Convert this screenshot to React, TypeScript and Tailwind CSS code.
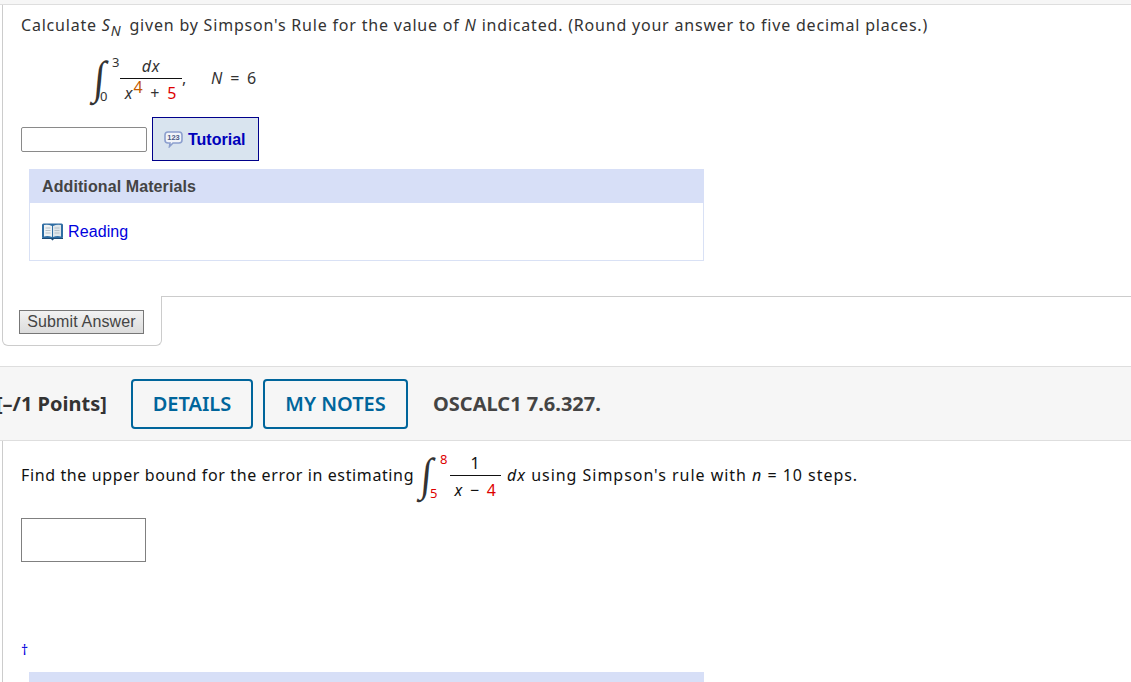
import React from 'react';

// stacked fraction used by both questions
function Fraction({ top, bottom, width }: { top: React.ReactNode; bottom: React.ReactNode; width: string }) {
  return (
    <span className={`inline-flex flex-col items-center ${width}`}>
      <span className="h-[24px] leading-[24px]">{top}</span>
      <span className="w-full h-px bg-[#111]" />
      <span className="h-[24px] leading-[28px] whitespace-nowrap [word-spacing:2px]">{bottom}</span>
    </span>
  );
}

function Integral({ upper, lower, color, gap, lowerGap }: { upper: string; lower: string; color: string; gap: string; lowerGap: string }) {
  return (
    <span className="inline-flex items-center h-[50px] w-[28px] shrink-0 relative">
      <span className="font-['Liberation_Serif',serif] text-[40px] leading-[50px] w-[14px] ml-[1px] flex justify-center scale-y-[1.15] -skew-x-6 font-normal text-[#333]">∫</span>
      <span className={`absolute top-[2px] text-[13px] leading-[14px] ${gap} ${color}`}>{upper}</span>
      <span className={`absolute bottom-0 text-[13px] leading-[14px] ${lowerGap} ${color}`}>{lower}</span>
    </span>
  );
}

function BookIcon() {
  return (
    <svg width="21" height="18" viewBox="0 0 21 18">
      <rect x="0" y="0.5" width="21" height="15" rx="1.5" fill="#2f6da3" />
      <path d="M2 2 Q6 1 10 3 V14 Q6 12.5 2 13.5 Z" fill="#eef2f4" />
      <path d="M19 2 Q15 1 11 3 V14 Q15 12.5 19 13.5 Z" fill="#dfe6ea" />
      <path d="M3.5 5 H8.5 M3.5 7.5 H8.5 M3.5 10 H8.5 M12.5 5 H17.5 M12.5 7.5 H17.5 M12.5 10 H17.5" stroke="#b4bfc8" strokeWidth="1" />
      <path d="M0 15 H21 V16 H12 L10.5 17.5 L9 16 H0 Z" fill="#1b4a76" />
    </svg>
  );
}

function TutorialIcon() {
  return (
    <svg width="19" height="17" viewBox="0 0 19 17">
      <path d="M4 1 H15 Q18 1 18 4 V9 Q18 12 15 12 H9 L5.5 15.5 L6 12 H4 Q1 12 1 9 V4 Q1 1 4 1 Z" fill="#f1f4f9" stroke="#8c9fce" strokeWidth="1.6" />
      <text x="9.5" y="9.2" textAnchor="middle" fontSize="7.5" fontWeight="700" fill="#4a5a86" fontFamily="Liberation Sans, sans-serif">123</text>
    </svg>
  );
}

export default function App() {
  return (
    <div className="h-[682px] w-[1131px] overflow-hidden bg-white font-['Noto_Sans',sans-serif] text-[16px] tracking-[0.8px] text-[#333]">
      <div className="h-[5px] bg-[#f6f6f6] border-b border-[#dedede]" />

      {/* first question */}
      <div className="ml-[2px] border-l border-[#cccccc] h-[291px] pl-[18px] pt-[8px]">
        <p className="h-[26px] leading-[24px] whitespace-nowrap">
          Calculate <i>S</i>
          <sub className="italic text-[14px] -bottom-[5px] mr-[3px]">N</sub> given by Simpson's Rule for the value of <i>N</i> indicated. (Round your answer to five decimal places.)
        </p>
        <div className="flex items-center h-[52px] mt-[13px] pl-[71px]">
          <Integral upper="3" lower="0" color="text-[#333]" gap="left-[20px]" lowerGap="left-[8px]" />
          <Fraction
            width="w-[62px]"
            top={<i>dx</i>}
            bottom={
              <span>
                <i>x</i>
                <sup className="text-[#c45a00] text-[16px] -top-[6px]">4</sup> + <span className="text-[#dd0000]">5</span>
              </span>
            }
          />
          <span className="self-start mt-[14px]">,</span>
          <span className="ml-[24px] [word-spacing:2px]">
            <i>N</i> = 6
          </span>
        </div>
        <div className="flex items-center mt-[13px] h-[44px]">
          <input className="w-[126px] h-[25px] mr-[5px] bg-white border border-[#8a8a8a] rounded-[2px]" />
          <button className="flex items-center gap-[5px] w-[107px] h-[44px] pl-[11px] pt-[1px] bg-[#d9e4ef] border border-[#00008b] text-[#0000bb] font-['Liberation_Sans',sans-serif] font-bold text-[16px] tracking-normal">
            <TutorialIcon />
            Tutorial
          </button>
        </div>
        <div className="mt-[8px] ml-[8px] w-[675px] h-[92px] border border-t-0 border-[#d9e1f5] font-['Liberation_Sans',sans-serif] tracking-[0.1px]">
          <div className="-ml-px -mr-px h-[34px] bg-[#d7dff7] pl-[13px] pt-[1px] leading-[34px] font-bold text-[#444]">Additional Materials</div>
          <div className="flex items-center gap-[5px] h-[56px] pl-[12px] pt-[1px] text-[#0000dd]">
            <BookIcon />
            Reading
          </div>
        </div>
      </div>

      <div className="flex h-[50px]">
        <div className="ml-[2px] w-[160px] h-[50px] border border-t-0 border-[#cccccc] rounded-b-[6px] pt-[14px] pl-[16px] font-['Liberation_Sans',sans-serif] tracking-[0.15px]">
          <button className="w-[125px] h-[24px] border border-[#777] bg-gradient-to-b from-[#f2f2f2] to-[#dcdcdc] text-[16px] leading-[20px] text-[#444]">Submit Answer</button>
        </div>
        <div className="flex-1 border-t border-[#cccccc]" />
      </div>

      {/* second question header */}
      <div className="mt-[20px] h-[75px] bg-[#f6f6f6] border-y border-[#dedede] flex items-center font-semibold text-[20px] tracking-[0px] whitespace-nowrap">
        <span className="-ml-[4px] w-[135px] font-bold text-[#333]">[–/1 Points]</span>
        <button className="w-[122px] h-[50px] border-2 border-[#00659b] rounded-[4px] text-[#00659b]">DETAILS</button>
        <button className="ml-[10px] w-[145px] h-[50px] border-2 border-[#00659b] rounded-[4px] text-[#00659b]">MY NOTES</button>
        <span className="ml-[25px] font-bold text-[#444]">OSCALC1 7.6.327.</span>
      </div>

      {/* second question */}
      <div className="ml-[2px] border-l border-[#cccccc] h-[241px] pl-[18px]">
        <div className="flex items-center h-[68px] mb-[9px] text-[#111] whitespace-nowrap">
          <span className="tracking-[0.62px]">Find the upper bound for the error in estimating</span>
          <span className="ml-[5px] inline-flex">
            <Integral upper="8" lower="5" color="text-[#dd0000]" gap="left-[21px]" lowerGap="left-[11px]" />
          </span>
          <span className="ml-[3px]">
            <Fraction width="w-[51px]" top="1" bottom={<span><i>x</i> − <span className="text-[#dd0000]">4</span></span>} />
          </span>
          <span className="ml-[6px] tracking-[0.97px]">
            <i>dx</i> using Simpson's rule with <i>n</i> = 10 steps.
          </span>
        </div>
        <input className="block w-[125px] h-[44px] bg-white border border-[#808080]" />
        <div className="mt-[77px] h-[22px] leading-[22px] text-[#0000dd] text-[14px]">†</div>
        <div className="mt-[11px] ml-[8px] w-[675px] h-[10px] bg-[#d7dff7]" />
      </div>
    </div>
  );
}
